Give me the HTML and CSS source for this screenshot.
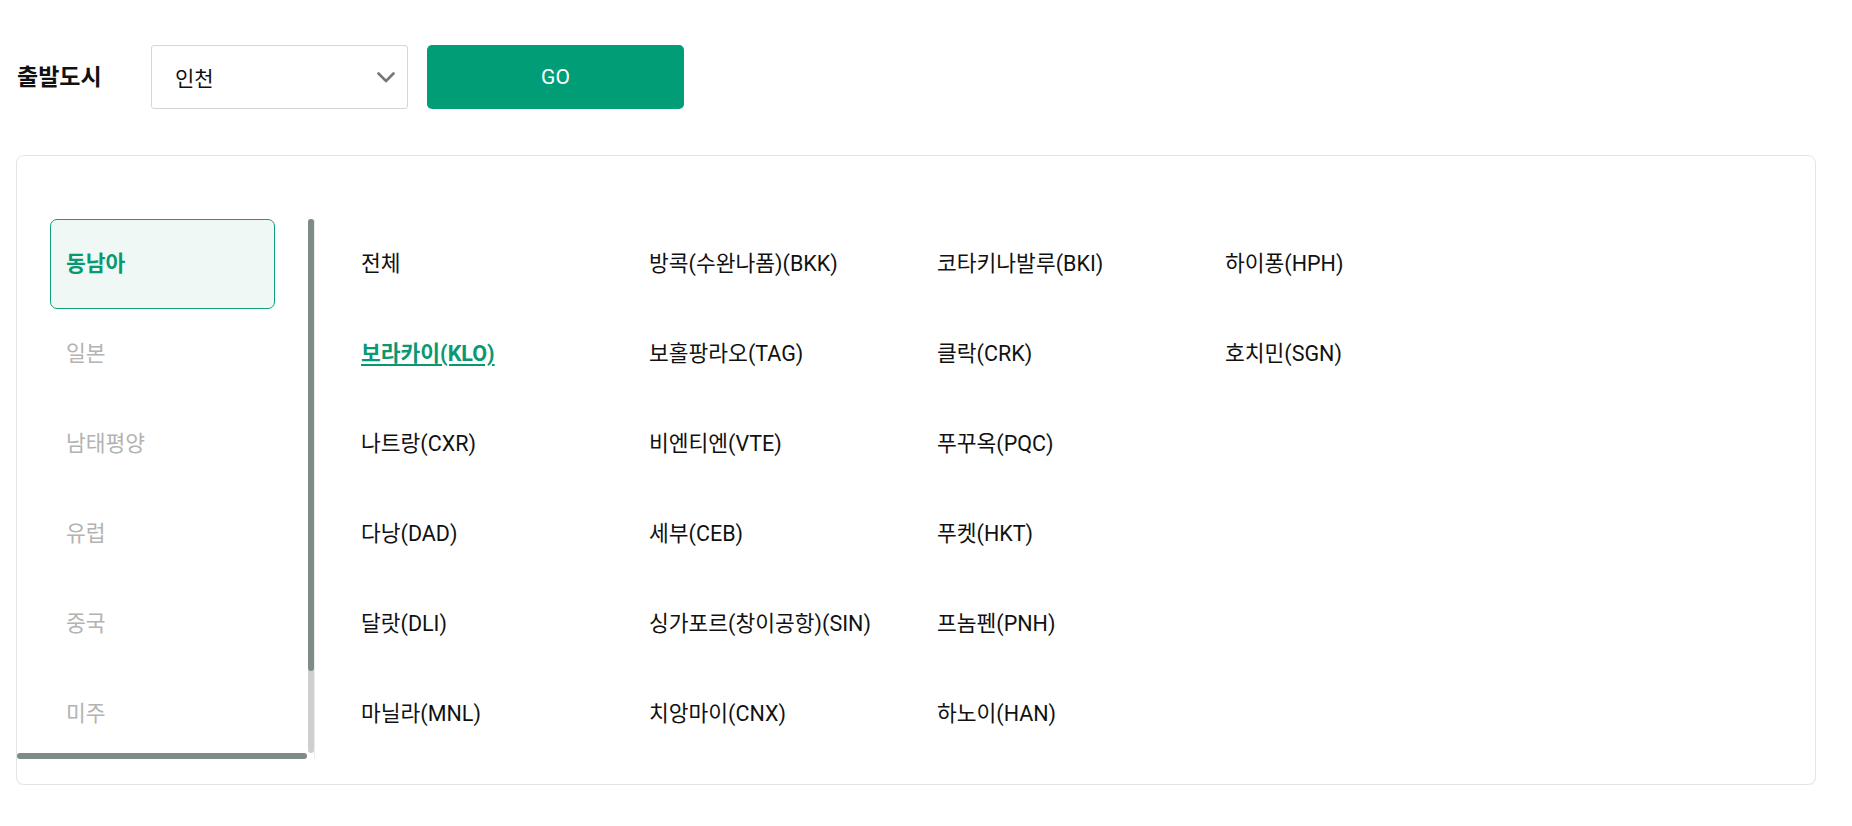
FILE: index.html
```html
<!DOCTYPE html>
<html lang="ko">
<head>
<meta charset="utf-8">
<title>출발도시</title>
<link rel="stylesheet" href="styles.css">
</head>
<body>
<div class="page">
  <div class="search-row">
    <span class="search-label">출발도시</span>
    <div class="select">
      <span class="select-value">인천</span>
      <svg class="chevron" width="18" height="11" viewBox="0 0 18 11"><path d="M1.5 1.5 L9 9 L16.5 1.5" fill="none" stroke="#777" stroke-width="2.6" stroke-linecap="round" stroke-linejoin="round"/></svg>
    </div>
    <button class="go-btn">GO</button>
  </div>

  <div class="card">
    <div class="tab-panel">
      <ul class="tabs">
        <li class="tab active">동남아</li>
        <li class="tab">일본</li>
        <li class="tab">남태평양</li>
        <li class="tab">유럽</li>
        <li class="tab">중국</li>
        <li class="tab">미주</li>
      </ul>
      <div class="vbar"><div class="vbar-thumb"></div></div>
      <div class="hbar"><div class="hbar-thumb"></div></div>
      <div class="bar-corner"></div>
    </div>
    <ul class="cities">
      <li class="city">전체</li>
      <li class="city">방콕(수완나폼)(BKK)</li>
      <li class="city">코타키나발루(BKI)</li>
      <li class="city">하이퐁(HPH)</li>
      <li class="city"><a class="city-link">보라카이(KLO)</a></li>
      <li class="city">보홀팡라오(TAG)</li>
      <li class="city">클락(CRK)</li>
      <li class="city">호치민(SGN)</li>
      <li class="city">나트랑(CXR)</li>
      <li class="city">비엔티엔(VTE)</li>
      <li class="city">푸꾸옥(PQC)</li>
      <li class="city"></li>
      <li class="city">다낭(DAD)</li>
      <li class="city">세부(CEB)</li>
      <li class="city">푸켓(HKT)</li>
      <li class="city"></li>
      <li class="city">달랏(DLI)</li>
      <li class="city">싱가포르(창이공항)(SIN)</li>
      <li class="city">프놈펜(PNH)</li>
      <li class="city"></li>
      <li class="city">마닐라(MNL)</li>
      <li class="city">치앙마이(CNX)</li>
      <li class="city">하노이(HAN)</li>
      <li class="city"></li>
    </ul>
  </div>
</div>
</body>
</html>
```

FILE: styles.css
```css
* { box-sizing: border-box; }

html, body {
  margin: 0;
  padding: 0;
  background: #ffffff;
}

body {
  font-family: "Roboto", "Noto Sans CJK KR", sans-serif;
  color: #111111;
}

.page {
  padding: 45px 0 0 16px;
}

.search-row {
  display: flex;
  align-items: center;
  height: 64px;
}

.search-label {
  width: 135px;
  padding: 0 0 5px 1px;
  font-size: 23px;
  font-weight: 700;
  color: #111;
}

.select {
  width: 257px;
  height: 64px;
  border: 1px solid #d6d6d6;
  border-radius: 3px;
  display: flex;
  align-items: center;
  justify-content: space-between;
  padding: 0 12px 0 23px;
  background: #fff;
}

.select-value {
  font-size: 21px;
  color: #111;
}

.chevron {
  display: block;
}

.go-btn {
  margin-left: 19px;
  width: 257px;
  height: 64px;
  border: none;
  border-radius: 5px;
  background: #019d76;
  color: #ffffff;
  font-family: "Roboto", "Noto Sans CJK KR", sans-serif;
  font-size: 21px;
  font-weight: 400;
  padding: 0;
}

.card {
  margin-top: 46px;
  width: 1800px;
  border: 1px solid #e4e4e4;
  border-radius: 8px;
  box-shadow: 0 1px 1px rgba(0, 0, 0, 0.05);
  padding: 63px 0 25px 0;
  display: flex;
  align-items: flex-start;
}

.tab-panel {
  flex: none;
  display: grid;
  grid-template-columns: 291px 6px 1px;
  grid-template-rows: 534px 6px;
}

.tabs {
  list-style: none;
  margin: 0;
  padding: 0 0 0 33px;
  height: 534px;
  overflow: hidden;
  grid-column: 1;
  grid-row: 1;
}

.tab {
  width: 225px;
  height: 90px;
  display: flex;
  align-items: center;
  padding: 0 0 6px 15px;
  font-size: 21.5px;
  color: #b3b3b3;
  border: 1px solid transparent;
  border-radius: 7px;
}

.tab.active {
  color: #0a9873;
  font-weight: 700;
  background: #f0f8f5;
  border-color: #12a07b;
}

.vbar {
  grid-column: 2;
  grid-row: 1;
  background: #cfcfcf;
  border-radius: 3px;
}

.vbar-thumb {
  height: 452px;
  background: #7f8b86;
  border-radius: 3px;
}

.hbar {
  grid-column: 1;
  grid-row: 2;
  padding-right: 1px;
}

.hbar-thumb {
  height: 6px;
  background: #7f8b86;
  border-radius: 3px;
}

.bar-corner {
  grid-column: 3;
  grid-row: 1 / span 2;
  background: #ececec;
}

.cities {
  list-style: none;
  margin: 0 0 0 46px;
  padding: 0;
  display: grid;
  grid-template-columns: repeat(4, 288px);
  grid-auto-rows: 90px;
}

.city {
  display: flex;
  align-items: center;
  padding-bottom: 6px;
  font-size: 21.5px;
  color: #111;
  white-space: nowrap;
}

.city-link {
  color: #0a9873;
  font-weight: 700;
  text-decoration: underline;
  text-decoration-thickness: 2px;
  text-underline-offset: 3px;
}
```
